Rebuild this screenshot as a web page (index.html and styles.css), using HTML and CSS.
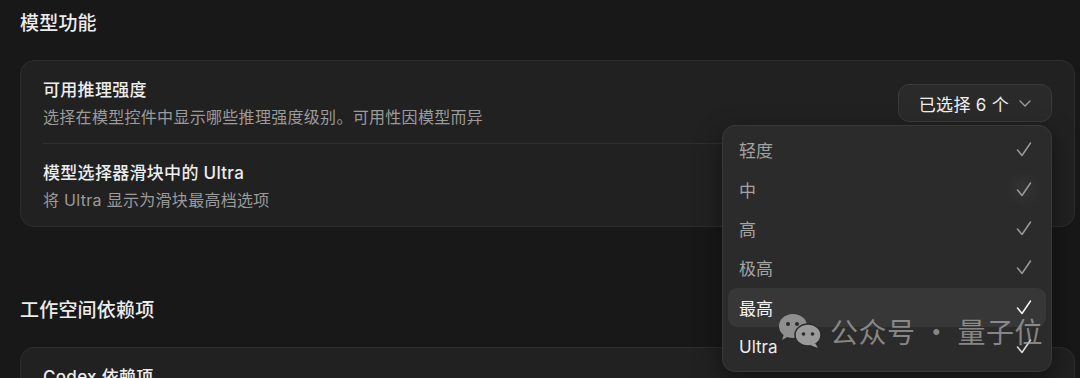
FILE: index.html
```html
<!DOCTYPE html>
<html lang="zh-CN">
<head>
<meta charset="utf-8">
<title>模型功能</title>
<link rel="stylesheet" href="styles.css">
</head>
<body>
<main class="page">
  <section class="section">
    <h2 class="section-title">模型功能</h2>
    <div class="card">
      <div class="row">
        <div class="row-text">
          <div class="row-title">可用推理强度</div>
          <div class="row-sub">选择在模型控件中显示哪些推理强度级别。可用性因模型而异</div>
        </div>
        <div class="select-wrap">
          <button class="select-btn">已选择 6 个
            <svg class="chev" width="12" height="7" viewBox="0 0 12 7"><path d="M1 1l5 5 5-5" fill="none" stroke="currentColor" stroke-width="1.4" stroke-linecap="round" stroke-linejoin="round"/></svg>
          </button>
          <ul class="menu">
            <li class="item"><span>轻度</span><svg class="check" width="16" height="15" viewBox="0 0 16 15"><path d="M1.5 8l4.5 5.5L14.5 1" fill="none" stroke="currentColor" stroke-width="1.5" stroke-linecap="round" stroke-linejoin="round"/></svg></li>
            <li class="item item-hover"><span>中</span><svg class="check" width="16" height="15" viewBox="0 0 16 15"><path d="M1.5 8l4.5 5.5L14.5 1" fill="none" stroke="currentColor" stroke-width="1.5" stroke-linecap="round" stroke-linejoin="round"/></svg></li>
            <li class="item"><span>高</span><svg class="check" width="16" height="15" viewBox="0 0 16 15"><path d="M1.5 8l4.5 5.5L14.5 1" fill="none" stroke="currentColor" stroke-width="1.5" stroke-linecap="round" stroke-linejoin="round"/></svg></li>
            <li class="item"><span>极高</span><svg class="check" width="16" height="15" viewBox="0 0 16 15"><path d="M1.5 8l4.5 5.5L14.5 1" fill="none" stroke="currentColor" stroke-width="1.5" stroke-linecap="round" stroke-linejoin="round"/></svg></li>
            <li class="item item-active"><span>最高</span><svg class="check" width="16" height="15" viewBox="0 0 16 15"><path d="M1.5 8l4.5 5.5L14.5 1" fill="none" stroke="currentColor" stroke-width="1.5" stroke-linecap="round" stroke-linejoin="round"/></svg></li>
            <li class="item item-bright"><span>Ultra</span><svg class="check" width="16" height="15" viewBox="0 0 16 15"><path d="M1.5 8l4.5 5.5L14.5 1" fill="none" stroke="currentColor" stroke-width="1.5" stroke-linecap="round" stroke-linejoin="round"/></svg></li>
          </ul>
        </div>
      </div>
      <div class="row">
        <div class="row-text">
          <div class="row-title">模型选择器滑块中的 Ultra</div>
          <div class="row-sub">将 Ultra 显示为滑块最高档选项</div>
        </div>
        <span class="toggle"></span>
      </div>
    </div>
  </section>

  <section class="section section-second">
    <h2 class="section-title">工作空间依赖项</h2>
    <div class="card">
      <div class="row">
        <div class="row-text">
          <div class="row-title">Codex 依赖项</div>
          <div class="row-sub">管理工作空间依赖项</div>
        </div>
        <span class="toggle toggle-on"></span>
      </div>
    </div>
  </section>

  <div class="watermark">
    <svg class="wm-icon" width="44" height="36" viewBox="0 0 44 36">
      <ellipse cx="15" cy="13" rx="14" ry="12" fill="#8f8f8f"/>
      <path d="M6 21l-2 6 7-4z" fill="#8f8f8f"/>
      <circle cx="10" cy="11" r="2" fill="#2a2a2a"/>
      <circle cx="19" cy="11" r="2" fill="#2a2a2a"/>
      <ellipse cx="30" cy="22" rx="13" ry="11" fill="#9a9a9a" stroke="#2a2a2a" stroke-width="1.5"/>
      <path d="M37 30l3 5-8-3z" fill="#9a9a9a"/>
      <circle cx="25.5" cy="21" r="1.8" fill="#2a2a2a"/>
      <circle cx="34.5" cy="21" r="1.8" fill="#2a2a2a"/>
    </svg>
    <span class="wm-text">公众号 · 量子位</span>
  </div>
</main>
</body>
</html>
```

FILE: styles.css
```css
html, body {
  margin: 0;
  height: 100%;
  overflow: hidden;
  background: #181818;
}

body {
  font-family: "Inter", "Noto Sans CJK SC", sans-serif;
  color: #ececec;
}

.page {
  position: relative;
  padding: 11px 5px 0 20px;
}

.section-title {
  margin: 0 0 23px;
  font-size: 19px;
  line-height: 26px;
  font-weight: 500;
  color: #ececec;
  letter-spacing: 0.2px;
}

.section-second {
  margin-top: 71px;
}

.card {
  background: #212121;
  border: 1px solid #2e2e2e;
  border-radius: 14px;
  padding: 0 22px;
}

.row {
  display: flex;
  align-items: center;
  justify-content: space-between;
  padding: 18px 0 16px;
}

.row + .row {
  border-top: 1px solid #2f2f2f;
}

.row-text {
  display: flex;
  flex-direction: column;
  gap: 6px;
}

.row-title {
  font-size: 17px;
  line-height: 22px;
  font-weight: 500;
  color: #ededed;
  letter-spacing: 0.3px;
}

.row-sub {
  font-size: 16px;
  line-height: 20px;
  color: #9b9b9b;
  letter-spacing: 0.3px;
}

.select-wrap {
  position: relative;
}

.select-btn {
  display: flex;
  align-items: center;
  gap: 10px;
  height: 38px;
  padding: 0 20px 0 20px;
  background: #2a2a2a;
  border: 1px solid #3b3b3b;
  border-radius: 11px;
  color: #f0f0f0;
  font-family: inherit;
  font-size: 17px;
  letter-spacing: 0.3px;
}

.chev {
  color: #9c9c9c;
  margin-top: 1px;
}

.menu {
  position: absolute;
  top: 41px;
  right: 0;
  width: 330px;
  box-sizing: border-box;
  margin: 0;
  padding: 4px 5px 5px;
  list-style: none;
  background: #2b2b2b;
  border: 1px solid #393939;
  border-radius: 13px;
  box-shadow: 0 10px 28px rgba(0, 0, 0, 0.45);
  z-index: 5;
}

.item {
  display: flex;
  align-items: center;
  justify-content: space-between;
  height: 39.4px;
  padding: 0 14px 0 11px;
  border-radius: 9px;
  font-size: 17px;
  color: #a3a3a3;
}

.check {
  color: #9a9a9a;
}

.item-hover {
  background: radial-gradient(circle 19px at calc(100% - 22px) 50%, rgba(255, 255, 255, 0.035), rgba(255, 255, 255, 0) 100%);
}

.item-active {
  background: #373737;
  color: #f4f4f4;
}

.item-active .check {
  color: #f4f4f4;
}

.item-bright {
  color: #ececec;
}

.item-bright .check {
  color: #dcdcdc;
}

.toggle {
  display: block;
  width: 38px;
  height: 24px;
  border-radius: 12px;
  background: #3d3d3d;
}

.toggle-on {
  background: #2b6cf0;
}

.watermark {
  position: absolute;
  left: 778px;
  top: 313px;
  display: flex;
  align-items: center;
  gap: 8px;
  z-index: 10;
  pointer-events: none;
}

.wm-text {
  font-family: "Noto Sans CJK SC", sans-serif;
  font-size: 28px;
  line-height: 36px;
  color: rgba(170, 170, 170, 0.72);
  letter-spacing: 0.5px;
}
```
